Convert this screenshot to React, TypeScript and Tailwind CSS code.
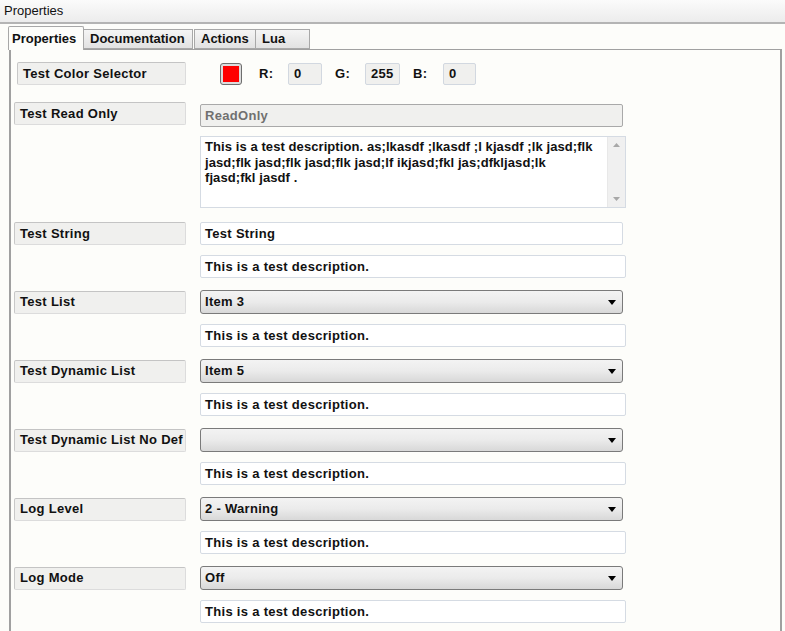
import React from 'react';

const Arrow: React.FC = () => (
  <svg width="8" height="5" viewBox="0 0 8 5" className="shrink-0">
    <path d="M0 0 H8 L4 5 Z" fill="#000" />
  </svg>
);

const Label: React.FC<{ text: string; className?: string }> = ({ text, className = 'w-[172px]' }) => (
  <div className={`${className} h-[23px] flex items-center pl-[5px] bg-[#f0f0ee] border border-[#dcdcdc] border-t-[#c4c4c4] border-l-[#c8c8c8] rounded-[2px] font-bold whitespace-nowrap overflow-hidden`}>
    {text}
  </div>
);

const Select: React.FC<{ value: string }> = ({ value }) => (
  <div className="w-[423px] h-[24px] flex items-center justify-between pl-[4px] pr-[6px] border border-[#7a7a7a] rounded-[3px] bg-gradient-to-b from-[#f3f3f3] via-[#ebebeb] to-[#d8d8d8] font-bold">
    <span>{value}</span>
    <Arrow />
  </div>
);

const Desc: React.FC = () => (
  <div className="w-[426px] h-[23px] flex items-center pl-[4px] bg-white border border-[#d5dbe3] rounded-[2px] font-bold">
    This is a test description.
  </div>
);

const ListRow: React.FC<{ label: string; value: string }> = ({ label, value }) => (
  <div className="mt-[12px]">
    <div className="flex items-center">
      <Label text={label} />
      <div className="ml-[14px]">
        <Select value={value} />
      </div>
    </div>
    <div className="ml-[186px] mt-[10px]">
      <Desc />
    </div>
  </div>
);

const RGBBox: React.FC<{ v: string; w: string }> = ({ v, w }) => (
  <div className={`${w} h-[22px] flex items-center pl-[5px] bg-[#f0f0ee] border border-[#d2d8e0] rounded-[2px] font-bold`}>
    {v}
  </div>
);

export default function App() {
  return (
    <div className="w-[785px] h-[631px] overflow-hidden bg-[#fdfdfa] text-[13px] text-[#111] font-['Liberation_Sans',Arial,sans-serif]">
      {/* Window title */}
      <div className="h-[24px] flex items-center pl-[4px] bg-gradient-to-b from-[#fbfbfb] to-[#ececec] border-b-2 border-[#b4b4b4] text-[13px]">
        Properties
      </div>

      {/* Tabs */}
      <div className="h-[25px] flex items-end pl-[8px]">
        <div className="h-[24px] w-[76px] flex items-center pl-[3px] bg-[#fdfdfa] border border-b-0 border-[#a8a8a8] font-bold rounded-t-[2px] relative top-[1px] z-10">
          Properties
        </div>
        <div className="h-[20px] w-[109px] flex items-center pl-[6px] bg-gradient-to-b from-[#f5f5f5] to-[#e2e2e2] border border-[#a8a8a8] border-l-0 font-bold">
          Documentation
        </div>
        <div className="h-[20px] w-[62px] flex items-center pl-[6px] ml-[1px] bg-gradient-to-b from-[#f5f5f5] to-[#e2e2e2] border border-[#a8a8a8] font-bold">
          Actions
        </div>
        <div className="h-[20px] w-[54px] flex items-center pl-[6px] bg-gradient-to-b from-[#f5f5f5] to-[#e2e2e2] border border-[#a8a8a8] border-l-0 font-bold">
          Lua
        </div>
      </div>

      {/* Panel */}
      <div className="ml-[9px] w-[773px] h-[600px] border-t border-l-2 border-r-2 border-[#a0a0a0] pl-[3px] pt-[12px] tracking-[0.3px]">
        {/* Color selector */}
        <div className="flex items-center">
          <div className="ml-[3px]">
            <Label text="Test Color Selector" className="w-[169px]" />
          </div>
          <div className="ml-[34px] w-[22px] h-[22px] rounded-[3px] border border-[#6e6e6e] bg-[#dcdcdc] p-[2px]">
            <div className="w-full h-full bg-[#ff0000]" />
          </div>
          <span className="ml-[17px] w-[29px] font-bold">R:</span>
          <RGBBox v="0" w="w-[34px]" />
          <span className="ml-[13px] w-[30px] font-bold">G:</span>
          <RGBBox v="255" w="w-[35px]" />
          <span className="ml-[13px] w-[30px] font-bold">B:</span>
          <RGBBox v="0" w="w-[33px]" />
        </div>

        {/* Read only */}
        <div className="mt-[17px]">
          <div className="flex items-start">
            <Label text="Test Read Only" />
            <div className="ml-[14px] mt-[2px] w-[423px] h-[23px] flex items-center pl-[4px] bg-[#f0f0ee] border border-[#a9a9a9] rounded-[2px] font-bold text-[#707070]">
              ReadOnly
            </div>
          </div>
          <div className="ml-[186px] mt-[9px] w-[426px] h-[72px] flex bg-white border border-[#d5dbe3]">
            <div className="flex-1 pl-[4px] pt-[2px] font-bold leading-[15.5px] whitespace-nowrap tracking-[0.08px]">
              <div>This is a test description. as;lkasdf ;lkasdf ;l kjasdf ;lk jasd;flk</div>
              <div>jasd;flk jasd;flk jasd;flk jasd;lf ikjasd;fkl jas;dfkljasd;lk</div>
              <div>fjasd;fkl jasdf .</div>
            </div>
            <div className="w-[18px] flex flex-col justify-between items-center py-[6px] bg-[#f0f0f0] border-l border-[#e8e8e8]">
              <svg width="7" height="4" viewBox="0 0 7 4"><path d="M0 4 L3.5 0 L7 4 Z" fill="#a8a8a8" /></svg>
              <svg width="7" height="4" viewBox="0 0 7 4"><path d="M0 0 L3.5 4 L7 0 Z" fill="#a8a8a8" /></svg>
            </div>
          </div>
        </div>

        {/* Test String */}
        <div className="mt-[14px]">
          <div className="flex items-center">
            <Label text="Test String" />
            <div className="ml-[14px] w-[423px] h-[23px] flex items-center pl-[4px] bg-white border border-[#d5dbe3] rounded-[2px] font-bold">
              Test String
            </div>
          </div>
          <div className="ml-[186px] mt-[10px]">
            <Desc />
          </div>
        </div>

        <ListRow label="Test List" value="Item 3" />
        <ListRow label="Test Dynamic List" value="Item 5" />
        <ListRow label="Test Dynamic List No Def" value="" />
        <ListRow label="Log Level" value="2 - Warning" />
        <ListRow label="Log Mode" value="Off" />
      </div>
    </div>
  );
}
